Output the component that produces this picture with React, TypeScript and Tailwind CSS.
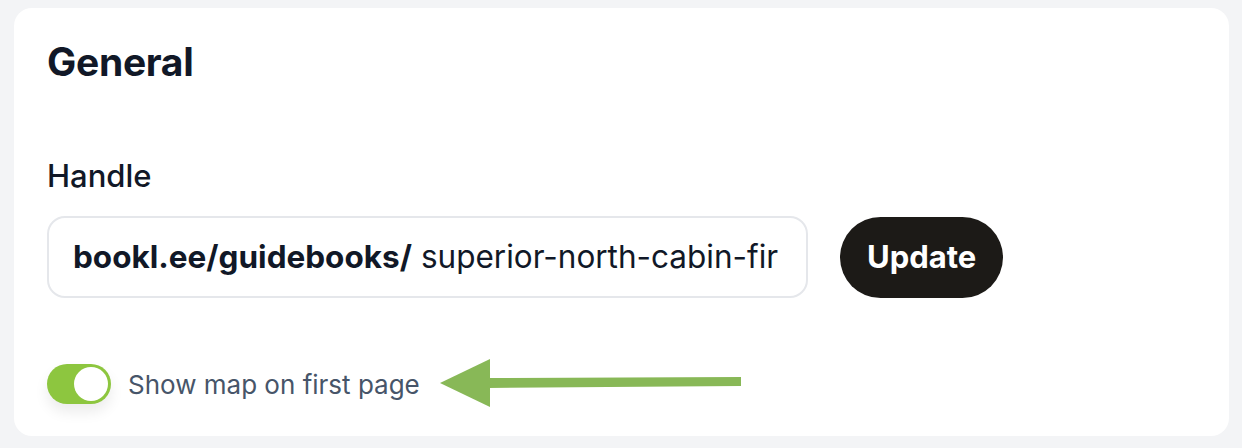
import React from "react";

const App = () => {
  return (
    <div className="w-[1242px] h-[448px] bg-[#f3f4f6] pt-2 pl-[14px] font-['Inter',sans-serif]">
      <div className="w-[1215px] h-[428px] bg-white rounded-[18px] pl-[33px] pt-[30px]">
        <h2 className="text-[39px] leading-[48px] font-bold text-[#111827] tracking-[-0.3px]">
          General
        </h2>

        <div className="mt-[71px] text-[31px] leading-[38px] font-medium text-[#111827]">
          Handle
        </div>

        <div className="mt-[21px] flex items-center gap-8">
          <div className="w-[761px] h-[82px] border-2 border-[#e5e7eb] rounded-[18px] px-6 flex items-center overflow-hidden whitespace-nowrap text-[31.5px] text-[#111827]">
            <span className="font-bold">bookl.ee/guidebooks/</span>
            <span className="ml-[9px]">superior-north-cabin-fir</span>
          </div>
          <button className="h-[81px] px-[27px] rounded-full bg-[#1c1a17] text-white text-[31px] font-bold">
            Update
          </button>
        </div>

        <div className="mt-[60px] flex items-center">
          {/* toggle */}
          <div className="w-16 h-10 rounded-full bg-[#8dc63f] flex items-center justify-end pr-[3px] shadow-[0_8px_14px_rgba(0,0,0,0.08)]">
            <div className="w-[34px] h-[34px] rounded-full bg-white" />
          </div>
          <span className="ml-[17px] text-[26px] text-[#475569]">Show map on first page</span>

          <svg className="ml-[20px]" width="302" height="52" viewBox="0 0 302 52">
            <polygon points="0,25 50,1 50,49" fill="#88b857" />
            <polygon points="48,20 301,19 301,28 48,30" fill="#88b857" />
          </svg>
        </div>
      </div>
    </div>
  );
};

export default App;
